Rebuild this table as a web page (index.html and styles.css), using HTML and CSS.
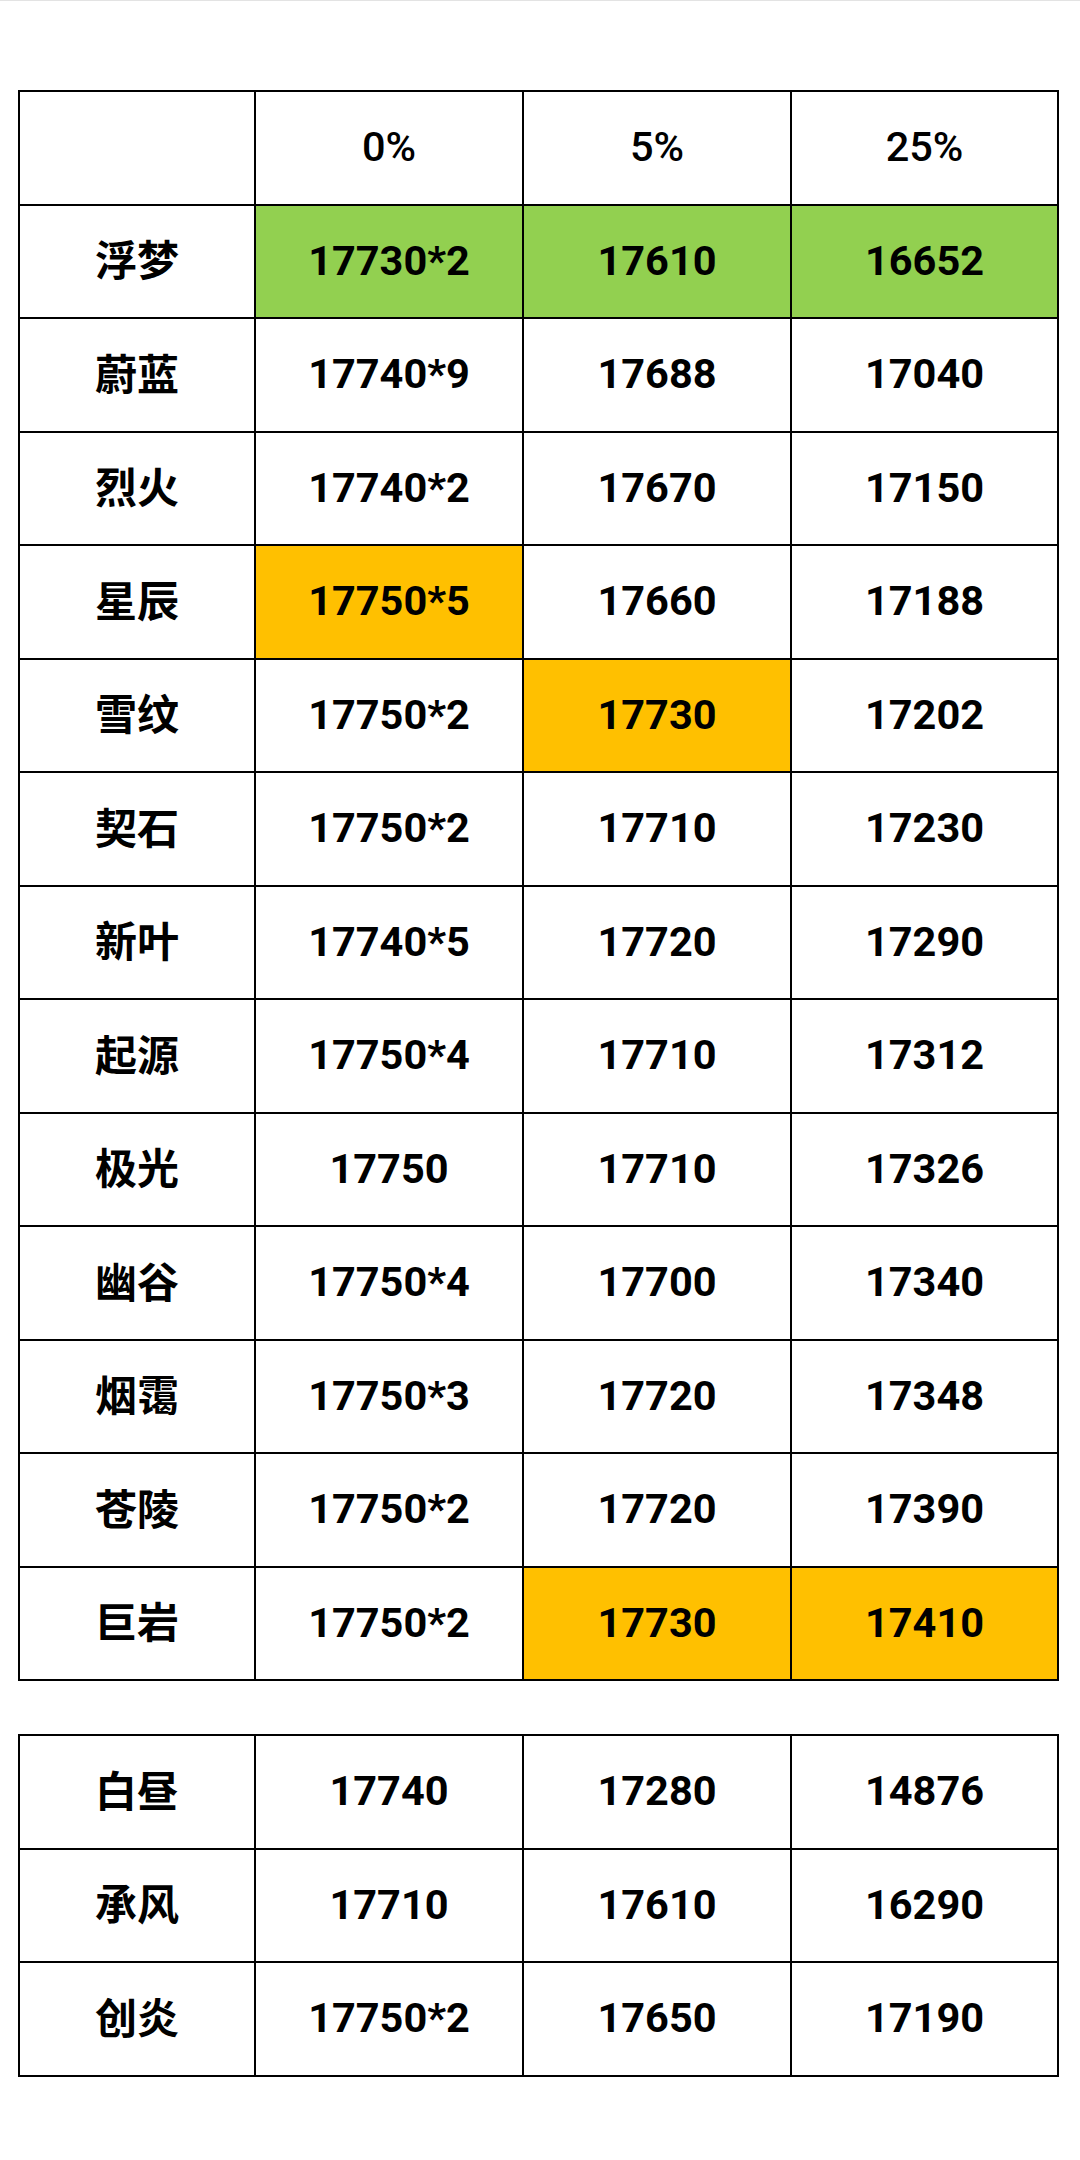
FILE: index.html
```html
<!DOCTYPE html>
<html>
<head>
<meta charset="utf-8">
<link rel="stylesheet" href="styles.css">
</head>
<body>
<div class="page">
  <div class="grid">
    <div class="cell"></div><div class="cell head">0%</div><div class="cell head">5%</div><div class="cell head">25%</div>
    <div class="cell name">浮梦</div><div class="cell green">17730*2</div><div class="cell green">17610</div><div class="cell green">16652</div>
    <div class="cell name">蔚蓝</div><div class="cell">17740*9</div><div class="cell">17688</div><div class="cell">17040</div>
    <div class="cell name">烈火</div><div class="cell">17740*2</div><div class="cell">17670</div><div class="cell">17150</div>
    <div class="cell name">星辰</div><div class="cell orange">17750*5</div><div class="cell">17660</div><div class="cell">17188</div>
    <div class="cell name">雪纹</div><div class="cell">17750*2</div><div class="cell orange">17730</div><div class="cell">17202</div>
    <div class="cell name">契石</div><div class="cell">17750*2</div><div class="cell">17710</div><div class="cell">17230</div>
    <div class="cell name">新叶</div><div class="cell">17740*5</div><div class="cell">17720</div><div class="cell">17290</div>
    <div class="cell name">起源</div><div class="cell">17750*4</div><div class="cell">17710</div><div class="cell">17312</div>
    <div class="cell name">极光</div><div class="cell">17750</div><div class="cell">17710</div><div class="cell">17326</div>
    <div class="cell name">幽谷</div><div class="cell">17750*4</div><div class="cell">17700</div><div class="cell">17340</div>
    <div class="cell name">烟霭</div><div class="cell">17750*3</div><div class="cell">17720</div><div class="cell">17348</div>
    <div class="cell name">苍陵</div><div class="cell">17750*2</div><div class="cell">17720</div><div class="cell">17390</div>
    <div class="cell name">巨岩</div><div class="cell">17750*2</div><div class="cell orange">17730</div><div class="cell orange">17410</div>
  </div>
  <div class="grid second">
    <div class="cell name">白昼</div><div class="cell">17740</div><div class="cell">17280</div><div class="cell">14876</div>
    <div class="cell name">承风</div><div class="cell">17710</div><div class="cell">17610</div><div class="cell">16290</div>
    <div class="cell name">创炎</div><div class="cell">17750*2</div><div class="cell">17650</div><div class="cell">17190</div>
  </div>
</div>
</body>
</html>
```
FILE: styles.css
```css
html, body {
  margin: 0;
  padding: 0;
  background: #ffffff;
}
body {
  border-top: 1px solid #e3e3e3;
  font-family: Roboto, "Noto Sans CJK SC", sans-serif;
  font-weight: 700;
  color: #000;
}
.page {
  padding: 89px 0 0 18px;
  display: flex;
  flex-direction: column;
  gap: 53px;
}
.grid {
  display: grid;
  width: 1037px;
  grid-template-columns: 234px 266px 266px 265px;
  grid-auto-rows: 111.5px;
  gap: 2px;
  padding: 2px;
  background: #000;
}
.cell {
  background: #fff;
  display: flex;
  align-items: center;
  justify-content: center;
  font-size: 41.5px;
  line-height: 1;
  padding-bottom: 2px;
}
.head { font-weight: 500; }
.name {
  font-family: "Noto Sans CJK SC", sans-serif;
  font-size: 42px;
  padding-bottom: 6px;
}
.green { background: #92d050; }
.orange { background: #ffc000; }
```
